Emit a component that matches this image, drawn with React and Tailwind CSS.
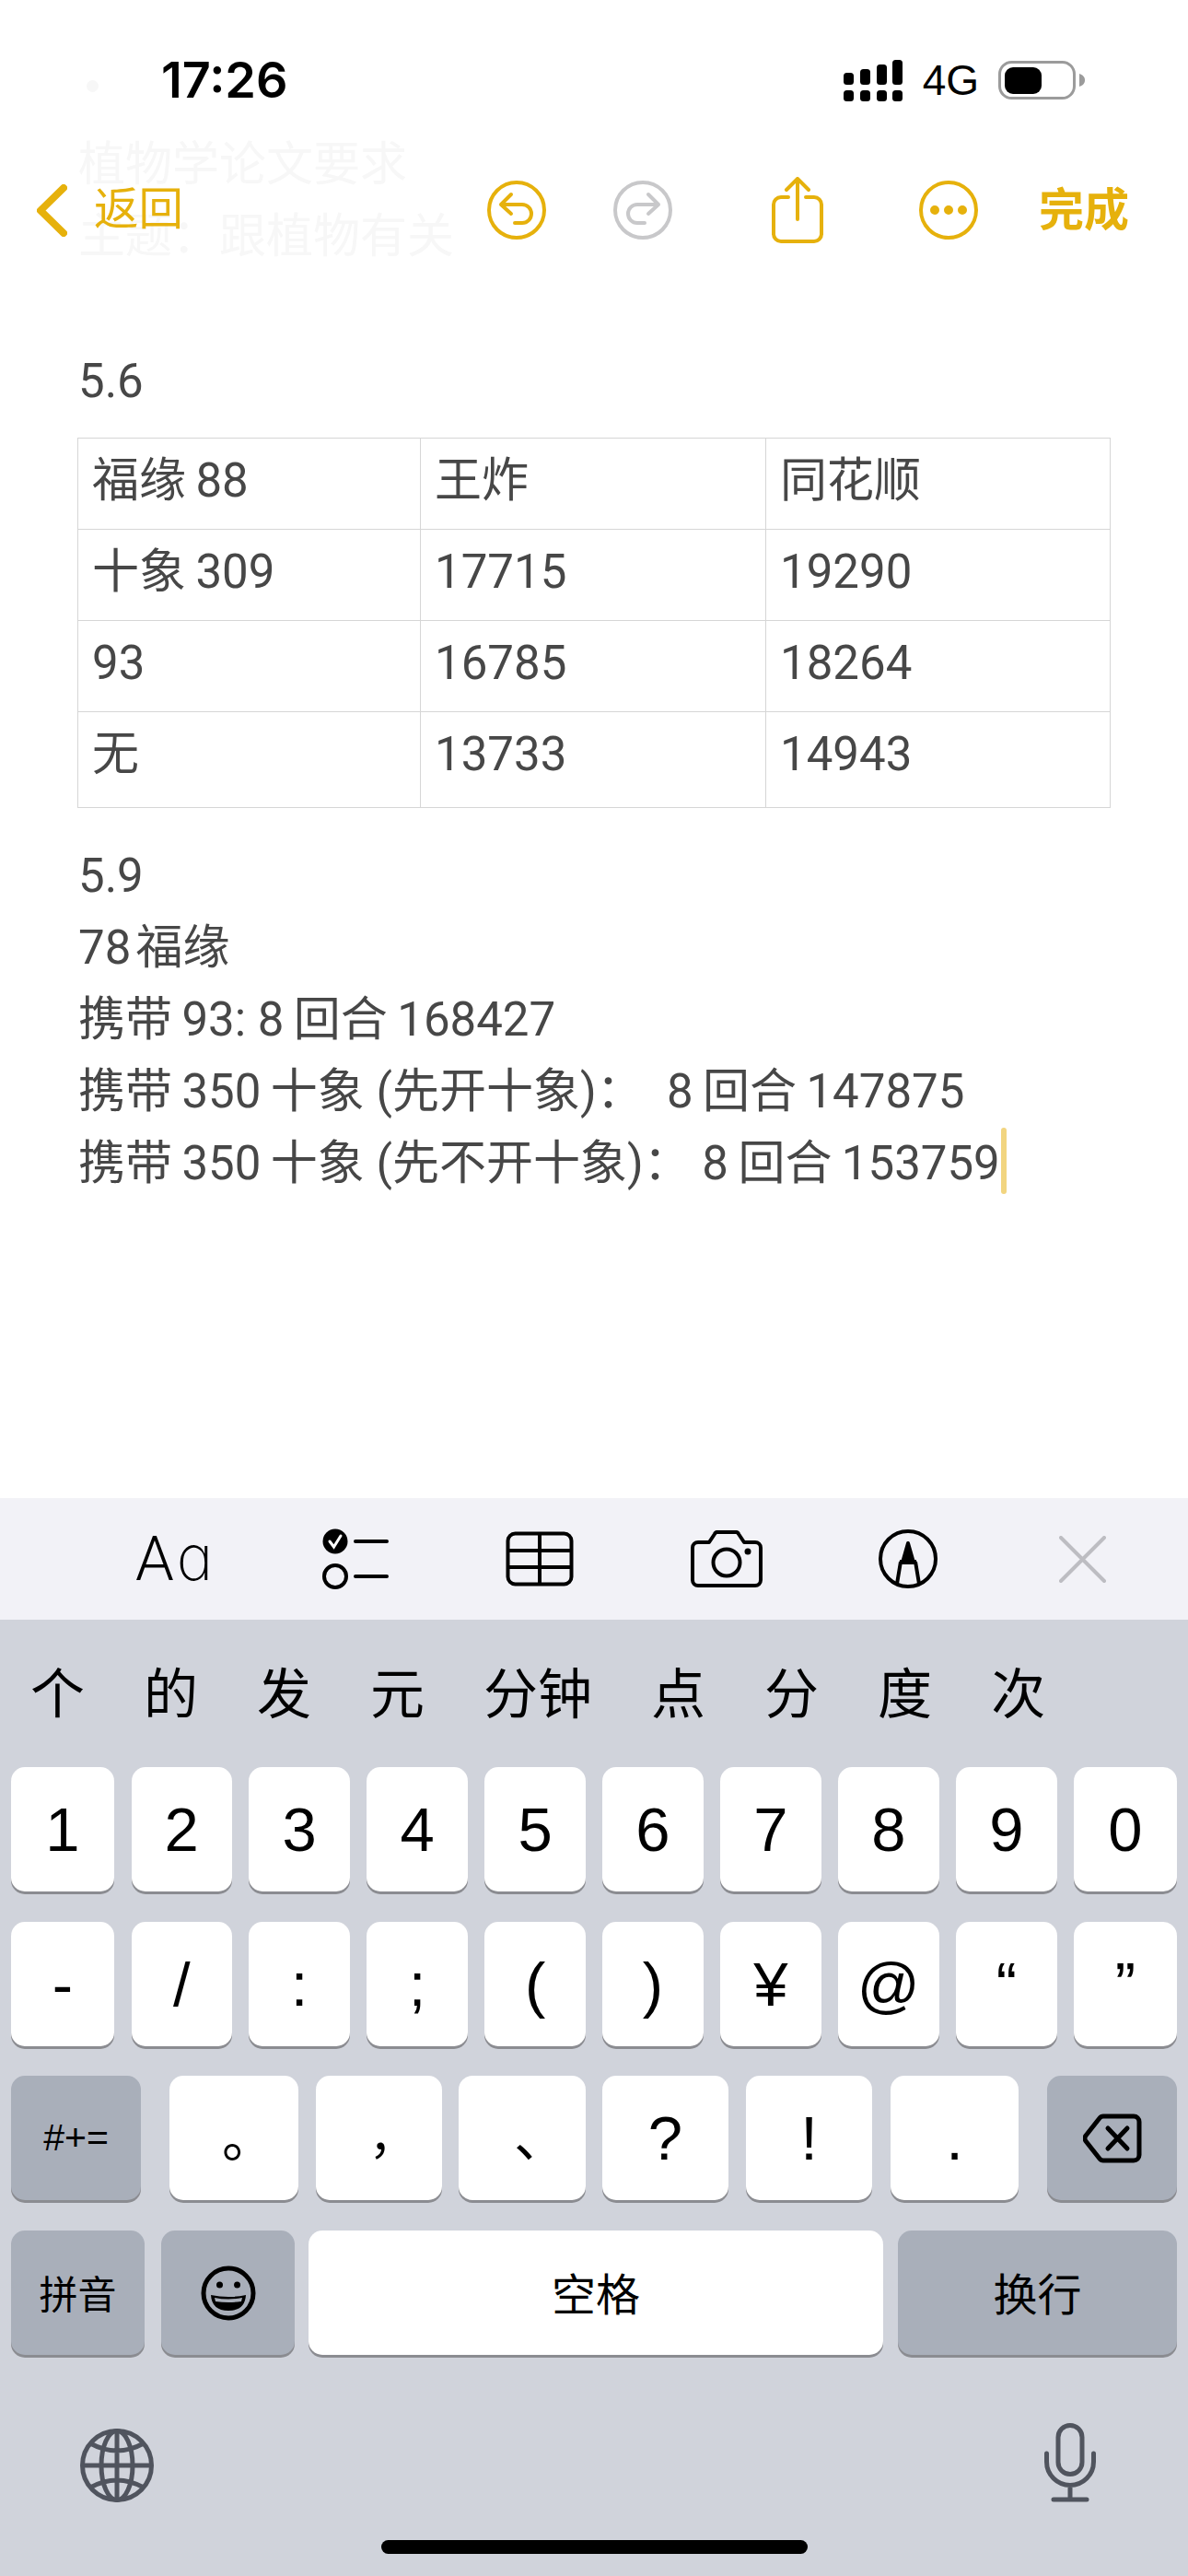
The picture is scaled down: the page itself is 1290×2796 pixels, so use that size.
import React from 'react';

const CJK = "font-['Roboto','Noto_Sans_CJK_SC',sans-serif]";
const THIN = '\u2009';
const HAIR = '\u200a';

function Key({ className = '', dark = false, children }) {
  return (
    <div
      className={`flex h-[135px] items-center justify-center rounded-[15px] shadow-[0_3px_0_#8b8c91] ${dark ? 'bg-[#a9afba]' : 'bg-white'} ${className}`}
    >
      {children}
    </div>
  );
}

function CircleIcon({ color, children }) {
  return (
    <svg width="64" height="66" viewBox="0 0 64 66" fill="none" stroke={color} strokeWidth="4" strokeLinecap="round" strokeLinejoin="round">
      <circle cx="32" cy="33" r="30" />
      {children}
    </svg>
  );
}

function StatusBar() {
  return (
    <div className="flex h-[174px] items-center pl-[175px] pr-[112px]">
      <span className="font-['Inter',sans-serif] text-[54px] font-semibold leading-none text-black">17:26</span>
      <div className="ml-auto flex items-center">
        <svg width="64" height="45" viewBox="0 0 64 45" fill="#000">
          <rect x="0" y="14" width="11" height="13" rx="3.5" />
          <rect x="18" y="10" width="11" height="17" rx="3.5" />
          <rect x="36" y="5" width="11" height="22" rx="3.5" />
          <rect x="53" y="0" width="11" height="27" rx="3.5" />
          <rect x="0" y="33" width="11" height="12" rx="3.5" />
          <rect x="18" y="33" width="11" height="12" rx="3.5" />
          <rect x="36" y="33" width="11" height="12" rx="3.5" />
          <rect x="53" y="33" width="11" height="12" rx="3.5" />
        </svg>
        <span className="ml-[22px] font-['Liberation_Sans',sans-serif] text-[46px] leading-none text-black">4G</span>
        <svg className="ml-[21px]" width="94" height="42" viewBox="0 0 94 42">
          <rect x="1.5" y="1.5" width="81" height="39" rx="13" fill="none" stroke="#9b9b9b" strokeWidth="3" />
          <rect x="7" y="7" width="40" height="29" rx="9" fill="#000" />
          <path d="M88 14c3 1 6 3 6 7s-3 6-6 7z" fill="#9b9b9b" />
        </svg>
      </div>
    </div>
  );
}

function NavBar() {
  const gold = '#e6b10c';
  return (
    <div className="flex h-[108px] items-center pl-[40px]">
      <svg width="33" height="57" viewBox="0 0 33 57" fill="none" stroke={gold} strokeWidth="8" strokeLinecap="round" strokeLinejoin="round">
        <path d="M29 4 L4 28.5 L29 53" />
      </svg>
      <span className={`ml-[29px] w-[97px] text-[48.5px] leading-none text-[#e6b10c] ${CJK}`}>返回</span>
      <div className="ml-[330px]">
        <CircleIcon color={gold}>
          <path d="M26 16 L15 27 L26 37 M15 27 H38 a10 10 0 0 1 0 20 H30" />
        </CircleIcon>
      </div>
      <div className="ml-[73px]">
        <CircleIcon color="#c8c8ca">
          <path d="M38 16 L49 27 L38 37 M49 27 H26 a10 10 0 0 0 0 20 H34" />
        </CircleIcon>
      </div>
      <svg className="ml-[108px]" width="56" height="72" viewBox="0 0 56 72" fill="none" stroke={gold} strokeWidth="4" strokeLinecap="round" strokeLinejoin="round">
        <path d="M18 22 H10 a8 8 0 0 0 -8 8 V62 a8 8 0 0 0 8 8 H46 a8 8 0 0 0 8 -8 V30 a8 8 0 0 0 -8 -8 H37" />
        <path d="M28 46 V2 M16 14 L28 2 L40 14" />
      </svg>
      <div className="ml-[104px]">
        <CircleIcon color={gold}>
          <circle cx="17" cy="33" r="3" fill={gold} />
          <circle cx="32" cy="33" r="3" fill={gold} />
          <circle cx="47" cy="33" r="3" fill={gold} />
        </CircleIcon>
      </div>
      <span className={`ml-[66px] text-[49px] font-bold leading-none text-[#e6b10c] ${CJK}`}>完成</span>
    </div>
  );
}

function NoteTable() {
  const rows = [
    ['福缘' + THIN + '88', '王炸', '同花顺'],
    ['十象' + THIN + '309', '17715', '19290'],
    ['93', '16785', '18264'],
    ['无', '13733', '14943'],
  ];
  return (
    <table className="mt-[22px] ml-[-1px] w-[1121px] table-fixed border-collapse border border-[#d0d0d0]">
      <colgroup>
        <col className="w-[372px]" />
        <col className="w-[375px]" />
        <col className="w-[374px]" />
      </colgroup>
      <tbody>
        {rows.map((row, i) => (
          <tr key={i} className={i === 3 ? 'h-[104px]' : 'h-[99px]'}>
            {row.map((cell, j) => (
              <td key={j} className="border border-[#d6d6d6] px-[15px] pt-[7px] pb-0 align-top">
                {cell}
              </td>
            ))}
          </tr>
        ))}
      </tbody>
    </table>
  );
}

function FormatBar() {
  const ink = '#000';
  return (
    <div className="flex h-[132px] items-center bg-[#f2f2f7]">
      <span className="ml-[147px] w-[79px] font-['Roboto','DejaVu_Sans',sans-serif] text-[67px] font-light leading-none tracking-[-1px] text-black">Aɑ</span>
      <svg className="ml-[124px]" width="72" height="66" viewBox="0 0 72 66" fill="none" stroke={ink} strokeWidth="4" strokeLinecap="round">
        <circle cx="14" cy="14" r="13.5" fill={ink} stroke="none" />
        <path d="M8 14 L12.5 20 L20 8" stroke="#fff" strokeWidth="3" />
        <circle cx="14" cy="52" r="12" />
        <path d="M36 14 H70 M36 52 H70" />
      </svg>
      <svg className="ml-[127px]" width="74" height="60" viewBox="0 0 74 60" fill="none" stroke={ink} strokeWidth="4">
        <rect x="2.5" y="2.5" width="69" height="55" rx="8" />
        <path d="M2 21 H72 M2 39 H72 M37 2 V58" />
      </svg>
      <svg className="ml-[127px]" width="78" height="62" viewBox="0 0 78 62" fill="none" stroke={ink} strokeWidth="4" strokeLinejoin="round">
        <path d="M8 13 H20 L26 4 a3 3 0 0 1 3 -2 H49 a3 3 0 0 1 3 2 L58 13 H70 a6 6 0 0 1 6 6 V54 a6 6 0 0 1 -6 6 H8 a6 6 0 0 1 -6 -6 V19 a6 6 0 0 1 6 -6 Z" />
        <circle cx="39" cy="35" r="14.5" />
        <circle cx="62" cy="23" r="3.5" fill={ink} stroke="none" />
      </svg>
      <svg className="ml-[126px]" width="64" height="66" viewBox="0 0 64 66" fill="none" stroke={ink} strokeWidth="4" strokeLinejoin="round">
        <circle cx="32" cy="33" r="30" />
        <path d="M24 36 L20 60 M40 36 L44 60 M23 36 H41" />
        <path d="M32 16 L38 37 H26 Z" fill={ink} />
      </svg>
      <svg className="ml-[132px]" width="51" height="51" viewBox="0 0 51 51" fill="none" stroke="#bdbdc2" strokeWidth="4" strokeLinecap="round">
        <path d="M2 2 L49 49 M49 2 L2 49" />
      </svg>
    </div>
  );
}

function Keyboard() {
  const candidates = ['个', '的', '发', '元', '分钟', '点', '分', '度', '次'];
  const digits = ['1', '2', '3', '4', '5', '6', '7', '8', '9', '0'];
  const symbols = ['-', '/', ':', ';', '(', ')', '¥', '@', '“', '”'];
  const edge = (i) => (i === 0 || i === 9 ? 'w-[112px]' : 'flex-1');
  return (
    <div className="flex flex-1 flex-col bg-[#d0d3db] text-black">
      <div className={`flex h-[160px] items-center gap-[64px] pl-[33px] pt-[2px] text-[59px] leading-none ${CJK}`}>
        {candidates.map((c, i) => (
          <span key={i}>{c}</span>
        ))}
      </div>
      <div className="flex gap-[18.5px] px-[12px] font-['Liberation_Sans',sans-serif] text-[67px] leading-none">
        {digits.map((d, i) => (
          <Key key={d} className={edge(i)}>{d}</Key>
        ))}
      </div>
      <div className="mt-[32.5px] flex gap-[18.5px] px-[12px] font-['Liberation_Sans',sans-serif] text-[67px] leading-none">
        {symbols.map((s, i) => (
          <Key key={s} className={edge(i)}>{s}</Key>
        ))}
      </div>
      <div className="mt-[32.5px] flex px-[12px] font-['Liberation_Sans',sans-serif] text-[67px] leading-none">
        <Key dark className="w-[141px] text-[41px]">#+=</Key>
        <Key className="ml-[31px] w-[140px]"><span className={`translate-x-[16px] text-[58px] ${CJK}`}>。</span></Key>
        <Key className="ml-[19px] w-[137px]"><span className={`translate-x-[15px] text-[52px] ${CJK}`}>，</span></Key>
        <Key className="ml-[18px] w-[138px]"><span className={`translate-x-[20px] text-[58px] ${CJK}`}>、</span></Key>
        <Key className="ml-[18px] w-[137px]">?</Key>
        <Key className="ml-[19px] w-[137px]">!</Key>
        <Key className="ml-[20px] w-[139px]">.</Key>
        <Key dark className="ml-[31px] w-[141px]">
          <svg width="64" height="54" viewBox="0 0 64 54" fill="none" stroke="#000" strokeWidth="5" strokeLinecap="round" strokeLinejoin="round">
            <path d="M22 3 H55 a6 6 0 0 1 6 6 V45 a6 6 0 0 1 -6 6 H22 a5 5 0 0 1 -4 -2 L3 30 a5 5 0 0 1 0 -6 L18 5 a5 5 0 0 1 4 -2 Z" />
            <path d="M27 16 L48 38 M48 16 L27 38" />
          </svg>
        </Key>
      </div>
      <div className={`mt-[33px] flex px-[12px] text-[48px] leading-none ${CJK}`}>
        <Key dark className="w-[145px] text-[42px]"><span className="translate-y-[3px]">拼音</span></Key>
        <Key dark className="ml-[18px] w-[145px]">
          <svg width="60" height="60" viewBox="0 0 60 60" fill="none" stroke="#000" strokeWidth="5">
            <circle cx="30" cy="30" r="27" />
            <circle cx="20.5" cy="21" r="3.5" fill="#000" stroke="none" />
            <circle cx="39.5" cy="21" r="3.5" fill="#000" stroke="none" />
            <path d="M11 32 Q30 36 49 32 Q48 49 30 49 Q12 49 11 32 Z" fill="#000" stroke="none" />
            <path d="M15 35 Q30 38 45 35 L44 39 Q30 41 16 39 Z" fill="#a9afba" stroke="none" />
          </svg>
        </Key>
        <Key className="ml-[15px] w-[624px]"><span className="translate-y-[3px]">空格</span></Key>
        <Key dark className="ml-[16px] w-[303px]"><span className="translate-y-[3px]">换行</span></Key>
      </div>
      <div className="mt-[74px] flex h-[86px] items-end justify-between pl-[87px] pr-[100px]">
        <svg width="80" height="80" viewBox="0 0 80 80" fill="none" stroke="#50545e" strokeWidth="5">
          <circle cx="40" cy="40" r="37.5" />
          <ellipse cx="40" cy="40" rx="17" ry="37.5" />
          <path d="M40 2 V78 M2 40 H78 M11 16 Q40 32 69 16 M11 64 Q40 48 69 64" />
        </svg>
        <svg width="56" height="86" viewBox="0 0 56 86" fill="none" stroke="#50545e" strokeWidth="5" strokeLinecap="round">
          <rect x="15" y="2.5" width="26" height="53" rx="13" />
          <path d="M2.5 33 V42 a25.5 25.5 0 0 0 51 0 V33 M28 68 V83 M10 83 H46" />
        </svg>
      </div>
      <div className="mx-auto mt-[41px] h-[15px] w-[463px] rounded-full bg-black" />
    </div>
  );
}

export default function App() {
  return (
    <div className={`flex h-[2796px] w-[1290px] flex-col overflow-hidden bg-white ${CJK}`}>
      <div className="relative">
        <div className="absolute left-[94px] top-[87px] h-[13px] w-[13px] rounded-full bg-[#f7f7f7]" />
        <div className="absolute left-[85px] top-[140px] text-[51px] leading-[78px] text-[#f7f7f7]">
          <p>植物学论文要求</p>
          <p>主题：跟植物有关</p>
        </div>
        <div className="relative">
          <StatusBar />
          <NavBar />
        </div>
      </div>
      <main className="flex-1 px-[85px] pt-[93px] text-[51px] leading-[78px] text-[#474747]">
        <p>5.6</p>
        <NoteTable />
        <div className="mt-[35px]">
          <p>5.9</p>
          <p>{'78' + HAIR + '福缘'}</p>
          <p>{'携带' + THIN + '93:' + ' 8' + THIN + '回合' + THIN + '168427'}</p>
          <p className="whitespace-pre">{'携带' + THIN + '350' + THIN + '十象' + ' (先开十象)：' + '  8' + THIN + '回合' + THIN + '147875'}</p>
          <p className="whitespace-pre">
            {'携带' + THIN + '350' + THIN + '十象' + ' (先不开十象)：' + ' 8' + THIN + '回合' + THIN + '153759'}
            <span className="ml-[1px] inline-block h-[72px] w-[6px] rounded-full bg-[#f2d580] align-[-16px]" />
          </p>
        </div>
      </main>
      <FormatBar />
      <div className="flex h-[1038px] flex-col">
        <Keyboard />
      </div>
    </div>
  );
}
